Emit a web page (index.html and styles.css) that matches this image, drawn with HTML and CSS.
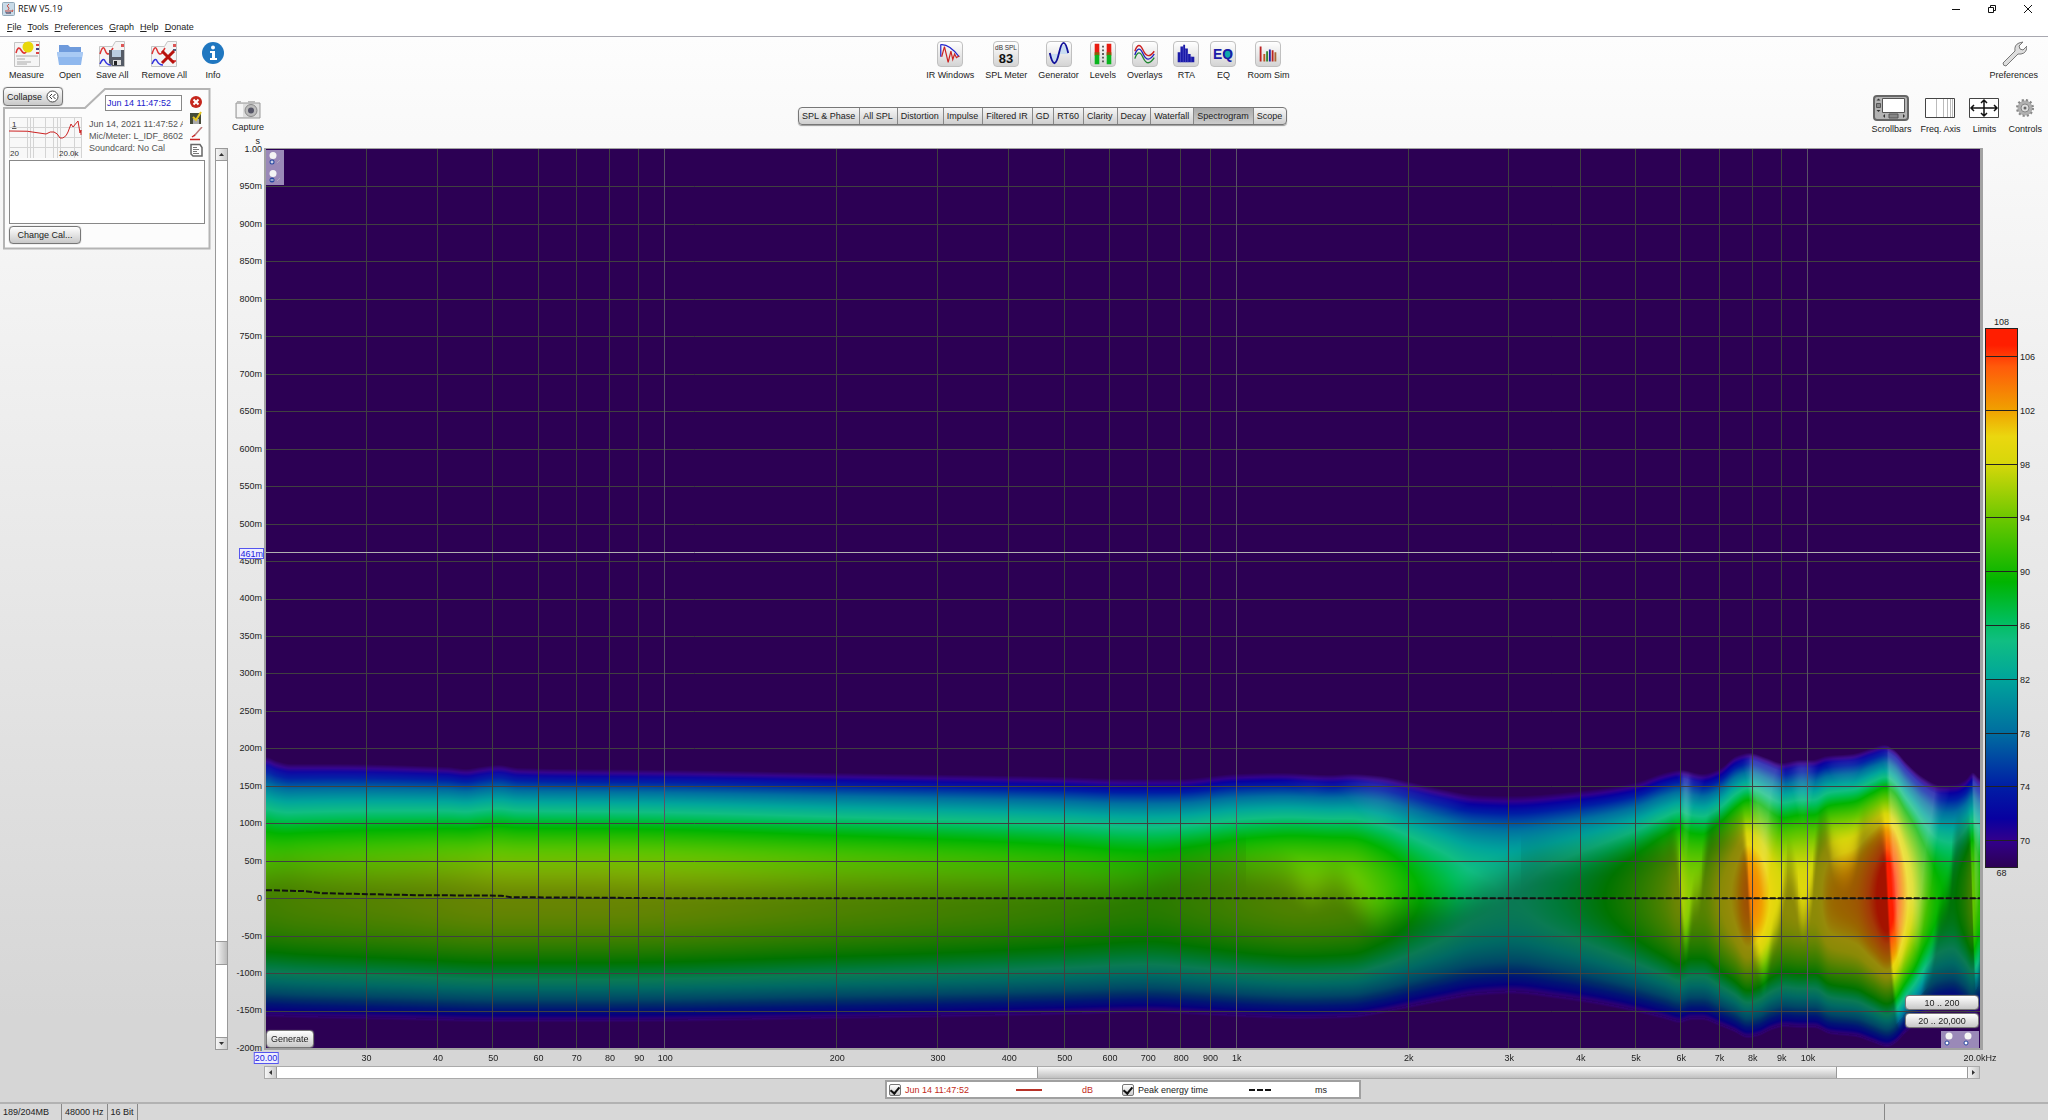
FILE: index.html
```html
<!DOCTYPE html>
<html lang="en">
<head>
<meta charset="utf-8">
<title>REW V5.19</title>
<link rel="stylesheet" href="styles.css">
</head>
<body>
<header class="titlebar">
  <svg class="app-icon" width="13" height="14" viewBox="0 0 13 14"><rect x=".5" y=".5" width="12" height="13" rx="1" fill="#c9dbe8" stroke="#91a8b8"/><path d="M7 2q-3 2-1 3t0 3M3 9h7M4 11h5M10 8q2 0 0 2" fill="none" stroke="#c5483d"/><path d="M3 9.5q3 2 6 0v2H4z" fill="#496f91"/></svg>
  <h1 class="app-title">REW V5.19</h1>
  <div class="window-buttons">
    <button aria-label="Minimize"><svg width="10" height="10"><path d="M1 5.5h8" stroke="#111" fill="none"/></svg></button>
    <button aria-label="Restore"><svg width="10" height="10"><path d="M1.500 3.500h5v5h-5zM3.500 3.500v-2h5v5h-2" stroke="#111" fill="none"/></svg></button>
    <button aria-label="Close"><svg width="10" height="10"><path d="M1 1l8 8M9 1l-8 8" stroke="#111" fill="none"/></svg></button>
  </div>
</header>
<nav class="menubar">
  <a href="#"><u>F</u>ile</a><a href="#"><u>T</u>ools</a><a href="#"><u>P</u>references</a><a href="#"><u>G</u>raph</a><a href="#"><u>H</u>elp</a><a href="#"><u>D</u>onate</a>
</nav>
<div class="workspace">
  <div class="toolbar">
    <div class="tools tools-file">
      <button class="tool"><svg width="26" height="26" viewBox="0 0 26 26"><path d="M.5 1.500h13l3-1h9v25H.5z" fill="#f5f5f5" stroke="#c4c4c4"/><path d="M2 12q2-8 5-3t5 2l4-3" fill="none" stroke="#d33" stroke-width="1.500"/><path d="M2 15h22M3 18h8M3 21h14M3 23h10" stroke="#aaa"/><circle cx="14" cy="6" r="5.500" fill="#e9d80b"/><path d="M22 3h3v2h-3zM22 11h3v2h-3z" fill="#d44"/><path d="M22 7h3v2h-3z" fill="#448"/></svg>Measure</button>
      <button class="tool"><svg width="26" height="26" viewBox="0 0 26 26"><path d="M2 4h9l2 2h11v12H2z" fill="#6f9bdc"/><path d="M0 11h26l-2 13H2z" fill="#8fb8ee"/><path d="M0 11h26l-1 5H1z" fill="#a9caf4"/></svg>Open</button>
      <button class="tool"><svg width="26" height="26" viewBox="0 0 26 26"><path d="M.5 5.500h13l3-5h9v25H.5z" fill="#f5f5f5" stroke="#c4c4c4"/><path d="M1 13q3-10 5-4t5 3l3-5" fill="none" stroke="#d33" stroke-width="1.500"/><path d="M1 23q3-7 5-3t6 4" fill="none" stroke="#33d" stroke-width="1.500"/><path d="M22 3h3v3h-3zM22 13h3v2h-3z" fill="#d55"/><path d="M10 9h15v16H13l-3-3z" fill="#555b66"/><path d="M13 9h9v7h-9z" fill="#b9cde0"/><path d="M14 19h8v5h-8z" fill="#ddd"/><path d="M15 20h3v4h-3z" fill="#222"/></svg>Save All</button>
      <button class="tool"><svg width="26" height="26" viewBox="0 0 26 26"><path d="M.5 5.500h13l3-5h9v25H.5z" fill="#f5f5f5" stroke="#c4c4c4"/><path d="M1 13q3-10 5-4t5 3l3-5" fill="none" stroke="#d33" stroke-width="1.500"/><path d="M1 23q3-7 5-3t6 4" fill="none" stroke="#33d" stroke-width="1.500"/><path d="M22 3h3v3h-3zM22 19h3v2h-3z" fill="#d55"/><path d="M22 8h3v2h-3z" fill="#557"/><path d="M11 10l12 12M23 10l-12 12" stroke="#b8120d" stroke-width="3"/></svg>Remove All</button>
      <button class="tool"><svg width="26" height="26" viewBox="0 0 26 26"><circle cx="13" cy="12" r="11" fill="#2077c0"/><circle cx="13" cy="6.500" r="2" fill="#fff"/><path d="M10 10h5v7h2v2h-7v-2h2v-5h-2z" fill="#fff"/></svg>Info</button>
    </div>
    <div class="tools tools-main">
      <button class="tool"><svg class="tile" width="26" height="26" viewBox="0 0 26 26"><path d="M3 16L3 3q9-1 20 13" fill="none" stroke="#22c" stroke-width="1.300"/><path d="M4 16L7 5l4 17 3-12 2 9 2-6 2 4 3-2" fill="none" stroke="#c22" stroke-width="1.300"/></svg>IR Windows</button>
      <button class="tool"><svg class="tile" width="26" height="26" viewBox="0 0 26 26"><text x="13" y="9" class="spl-unit">dB SPL</text><text x="13" y="23" class="spl-value">83</text></svg>SPL Meter</button>
      <button class="tool"><svg class="tile" width="26" height="26" viewBox="0 0 26 26"><path d="M3 13q5 20 10 0q5-20 10 0z" fill="#c9dcf0"/><path d="M3 12q5 22 10 0q5-22 10 0" fill="none" stroke="#119" stroke-width="2"/></svg>Generator</button>
      <button class="tool"><svg class="tile" width="26" height="26" viewBox="0 0 26 26"><path d="M4 2h5v12H4zM17 2h5v12h-5z" fill="#e81b10"/><path d="M4 11h5v4H4zM17 11h5v4h-5z" fill="#865f08"/><path d="M4 14h5v10H4zM17 14h5v10h-5z" fill="#0ab41e"/><path d="M13 4v18" stroke="#555" stroke-width="2" stroke-dasharray="2 2"/></svg>Levels</button>
      <button class="tool"><svg class="tile" width="26" height="26" viewBox="0 0 26 26"><g fill="none" stroke-width="1.500"><path d="M2 10q4-12 9-1t12 1" stroke="#c22"/><path d="M2 14q4-12 9-1t12 0" stroke="#22b"/><path d="M2 18q4-12 9-1t12 0" stroke="#283"/></g></svg>Overlays</button>
      <button class="tool"><svg class="tile" width="26" height="26" viewBox="0 0 26 26"><path d="M4 22V11h3v11zM7 22V5h3v17zM10 22V3h2v19zM12 22V7h3v15zM15 22v-9h3v9zM18 22v-6h4v6z" fill="#1a1aa8"/><path d="M7 10v12M10 5v17M12.500 8v14M15 12v10M18.500 15v7" stroke="#6a6ad0" stroke-width=".6"/></svg>RTA</button>
      <button class="tool"><svg class="tile" width="26" height="26" viewBox="0 0 26 26"><circle cx="18" cy="13" r="5" fill="#1aa"/><text x="13" y="18" class="eq-mark">EQ</text></svg>EQ</button>
      <button class="tool"><svg class="tile" width="26" height="26" viewBox="0 0 26 26"><g stroke-width="2" fill="none"><path d="M5 21V5M18 21V9" stroke="#b22"/><path d="M9 21v-8" stroke="#b52"/><path d="M12 21V10" stroke="#383"/><path d="M15 21V8" stroke="#22a"/><path d="M21 21V11" stroke="#a63"/></g></svg>Room Sim</button>
    </div>
    <div class="tools tools-prefs">
      <button class="tool"><svg width="26" height="26" viewBox="0 0 26 26"><path d="M2 22L14 10q-1-6 4-8l4-1-4 4 1 3 3 1 4-4q0 7-6 8l-3 0L5 25q-3 0-3-3z" fill="#ddd" stroke="#777"/></svg>Preferences</button>
    </div>
  </div>
  <main class="body">
    <aside class="sidebar">
      <button class="btn collapse">Collapse <svg width="13" height="13"><circle cx="6.500" cy="6.500" r="5.500" fill="#fff" stroke="#444"/><path d="M6 4L3.500 6.500 6 9M9.500 4L7 6.500 9.500 9" fill="none" stroke="#333"/></svg></button>
      <section class="card">
        <svg class="card-outline" width="208" height="162"><path d="M1 20H82L102 1H206.500V160.500H1Z" fill="#fcfcfc" stroke="#b4b4b4" stroke-width="2"/></svg>
        <div class="card-grid">
          <div class="card-left">
            <svg class="thumb" width="73" height="41"><rect width="73" height="41" fill="#f8f8f8"/><path d="M0 .5h73M0 10.500h73M0 20.500h73M0 30.500h73M.5 0v41M18.500 0v41M21.500 0v41M24.500 0v41M36.500 0v41M44.500 0v41M48.500 0v41M51.500 0v41M65.500 0v41M72.500 0v41" stroke="#d4d4d4"/><path d="M0 14q18-1 37 3q9-6 14 4q5 1 8-6l3-8 2 3 5-6 2 12 1-3v5" fill="none" stroke="#c22"/><text x="3" y="10" class="thumb-text underline">1</text><text x="1" y="39" class="thumb-text">20</text><text x="50" y="39" class="thumb-text">20.0k</text></svg>
          </div>
          <div class="card-info">
            <input class="name-input" aria-label="Measurement name" value="Jun 14 11:47:52">
            <p>Jun 14, 2021 11:47:52 AM</p><p>Mic/Meter: L_IDF_8602065</p><p>Soundcard: No Cal</p>
          </div>
          <div class="card-icons">
            <button aria-label="Remove"><svg width="14" height="14"><circle cx="7" cy="7" r="6" fill="#c5261c"/><path d="M4.500 4.500l5 5M9.500 4.500l-5 5" stroke="#fff" stroke-width="2"/></svg></button>
            <button aria-label="Save"><svg width="14" height="14"><path d="M1 2h11v11H1z" fill="#454b38"/><path d="M4 8h6v5H4z" fill="#aaa"/><path d="M4 6l3 3 5-8" fill="none" stroke="#e6c620" stroke-width="2"/></svg></button>
            <button aria-label="Trace colour"><svg width="14" height="14"><path d="M13 0L5 9" stroke="#b77" stroke-width="1.500"/><path d="M6 8l-3 2M1 12.500h10" stroke="#c22" stroke-width="1.500"/></svg></button>
            <button aria-label="Notes"><svg width="14" height="14"><path d="M2 1.500h9l2 3V13H4l-2-2z" fill="#fff" stroke="#666" stroke-width="1.500"/><path d="M4 4.500h4M4 6.500h6M4 8.500h4M4 10.500h6" stroke="#777"/></svg></button>
          </div>
        </div>
        <textarea class="notes" aria-label="Notes"></textarea>
        <button class="btn change-cal">Change Cal...</button>
      </section>
    </aside>
    <section class="graph-area">
      <div class="graph-head">
        <div class="head-left"><button class="tool"><svg width="26" height="22" viewBox="0 0 26 22"><path d="M1 5h24v15H1z" fill="#ddd" stroke="#999"/><path d="M2 3h4v2H2zM13 3h7v2h-7z" fill="#bbb"/><path d="M2 6h6v13H2z" fill="#f5f5f5"/><circle cx="16" cy="12.500" r="6" fill="#bbb" stroke="#888"/><circle cx="16" cy="12.500" r="3" fill="#556"/></svg>Capture</button></div>
        <nav class="tabs">
          <button>SPL &amp; Phase</button><button>All SPL</button><button>Distortion</button><button>Impulse</button><button>Filtered IR</button><button>GD</button><button>RT60</button><button>Clarity</button><button>Decay</button><button>Waterfall</button><button class="active">Spectrogram</button><button>Scope</button>
        </nav>
        <div class="head-right">
          <button class="tool"><svg width="36" height="26"><rect x="1" y="1" width="34" height="24" rx="3" fill="#b4b4b4" stroke="#666" stroke-width="2"/><path d="M9.500 3.500h22v14h-22z" fill="#fff" stroke="#555"/><path d="M3.500 5.500l2-2 2 2zM3.500 15l2 2 2-2zM12 19l-2 2 2 2zM30 19l2 2-2 2z" fill="#333"/><path d="M3.500 8.500h4v4h-4zM16 19h9v4h-9z" fill="#888" stroke="#555"/></svg>Scrollbars</button>
          <button class="tool"><svg width="30" height="26"><path d="M.5 3.500h29v19H.5z" fill="#fff" stroke="#444"/><path d="M11.500 4v18M18.500 4v18M22.500 4v18M25.500 4v18M27.500 4v18" stroke="#bbb"/></svg>Freq. Axis</button>
          <button class="tool"><svg width="30" height="26"><path d="M.5 3.500h29v19H.5z" fill="#fff" stroke="#444"/><path d="M2 13h26M15 5v16M12 8l3-3 3 3M12 18l3 3 3-3M5 10l-3 3 3 3M25 10l3 3-3 3" stroke="#111" stroke-width="1.500" fill="none"/></svg>Limits</button>
          <button class="tool"><svg width="26" height="26"><circle cx="13" cy="13" r="7.500" fill="#aaa" stroke="#888" stroke-width="3" stroke-dasharray="2 2"/><circle cx="13" cy="13" r="7" fill="#b0b0b0"/><circle cx="13" cy="13" r="4" fill="#ddd" stroke="#888"/><circle cx="13" cy="13" r="1.500" fill="#666"/></svg>Controls</button>
        </div>
      </div>
      <div class="plot-grid">
        <div class="vscroll"><button aria-label="Scroll up"><svg width="7" height="5"><path d="M1 4l2.500-3L6 4z" fill="#333"/></svg></button><span class="vtrack"></span><span class="vthumb"></span><span class="vtrack-end"></span><button aria-label="Scroll down"><svg width="7" height="5"><path d="M1 1l2.500 3L6 1z" fill="#333"/></svg></button></div>
        <div class="yaxis"><span class="unit">s</span><div class="ylabels" id="ylabels"></div><span class="cursor-y">461m</span></div>
        <div class="plot">
          <canvas id="spectrogram" class="spectrogram" width="1714" height="899"></canvas>
          <div class="zoom-y"><svg width="18" height="35"><g><circle cx="7" cy="5.500" r="3.500" fill="#f4f4f4"/><circle cx="6" cy="12" r="2.500" fill="#2848a0"/><path d="M4.500 12h3M6 10.500v3" stroke="#fff"/><path d="M11 13l3-3" stroke="#b0a8c0"/></g><g><circle cx="7" cy="23.500" r="3.500" fill="#f4f4f4"/><circle cx="6" cy="30" r="2.500" fill="#2848a0"/><path d="M4.500 30h3" stroke="#fff"/><path d="M11 31l3-3" stroke="#b0a8c0"/></g></svg></div>
          <button class="btn generate">Generate</button>
          <div class="ranges"><button class="btn">10 .. 200</button><button class="btn">20 .. 20,000</button>
            <svg width="38" height="17"><rect width="38" height="17" fill="#9a89b8"/><circle cx="8" cy="5" r="3.500" fill="#f4f4f4"/><circle cx="6" cy="12" r="2" fill="#fff" stroke="#2848a0"/><circle cx="27" cy="5" r="3.500" fill="#f4f4f4"/><circle cx="25" cy="12" r="2" fill="#fff" stroke="#2848a0"/></svg></div>
        </div>
        <div class="legend-scale"><span class="scale-end">108</span><div class="scale-bar" id="scale"></div><span class="scale-end">68</span></div>
        <div class="xaxis" id="xaxis"><span class="cursor-x">20.00</span></div>
        <div class="hscroll"><button aria-label="Scroll left"><svg width="5" height="7"><path d="M4 1L1 3.500 4 6z" fill="#333"/></svg></button><span class="htrack"></span><span class="hthumb"></span><span class="htrack-end"></span><button aria-label="Scroll right"><svg width="5" height="7"><path d="M1 1l3 2.500L1 6z" fill="#333"/></svg></button></div>
      </div>
    </section>
  </main>
  <div class="legend">
    <label class="trace-red"><input type="checkbox" checked>Jun 14 11:47:52</label>
    <svg width="26" height="6"><path d="M0 3h26" stroke="#b83228" stroke-width="2"/></svg><span class="trace-red">dB</span>
    <label><input type="checkbox" checked>Peak energy time</label>
    <svg width="24" height="6"><path d="M0 3h24" stroke="#111" stroke-width="2" stroke-dasharray="6 2"/></svg><span>ms</span>
  </div>
</div>
<footer class="statusbar"><span class="cell-mem">189/204MB</span><span>48000 Hz</span><span>16 Bit</span><span class="cell-end"></span></footer>
<script src="plot.js"></script>
</body>
</html>
```
FILE: styles.css
```css
* { box-sizing: border-box; }
body { margin: 0; min-height: 100vh; display: flex; flex-direction: column; font: 9px/12px "Liberation Sans", Arial, sans-serif; color: #222; background: #fff; }
button, input, textarea { font: inherit; color: inherit; margin: 0; }
button { background: none; border: 0; padding: 0; }
a { color: inherit; text-decoration: none; }
p { margin: 0; }
svg { display: block; flex: none; }

.titlebar { display: flex; align-items: center; height: 18px; padding: 0 15px 0 2px; }
.app-title { margin: 0 0 0 3px; font: 9px/16px "Open Sans", "Noto Sans", sans-serif; color: #111; }
.window-buttons { margin-left: auto; display: flex; gap: 26px; }
.menubar { display: flex; gap: 6px; height: 19px; padding: 3px 7px; border-bottom: 1px solid #a8a8b0; }

.workspace { flex: 1; display: flex; flex-direction: column; background: linear-gradient(#fdfdfd, #d6d6d6 92%); border-bottom: 2px solid #b2b2b2; }
.toolbar { display: flex; justify-content: space-between; height: 50px; padding: 4px 10px 0 9px; }
.tools { display: flex; }
.tools-file { gap: 13px; }
.tools-main { gap: 11px; }
.tool { display: flex; flex-direction: column; align-items: center; gap: 1px; white-space: nowrap; }
.tool svg { margin-bottom: 1px; }
.tile { border: 1px solid #c0c0c0; border-radius: 4px; background: linear-gradient(#fff, #d4d4d4); }
.spl-unit { font-size: 7px; text-anchor: middle; fill: #333; }
.spl-value { font-size: 14px; font-weight: bold; text-anchor: middle; fill: #111; }
.eq-mark { font-size: 15px; font-weight: bold; text-anchor: middle; fill: #1c1ca8; }

.body { flex: 1; display: flex; }
.btn { border: 1px solid #777; border-radius: 4px; background: linear-gradient(#fff, #c8c8c8); box-shadow: 0 0 1px #888; height: 18px; }

.sidebar { width: 215px; padding-left: 3px; position: relative; }
.collapse { position: absolute; left: 3px; top: 0; z-index: 1; display: flex; align-items: center; gap: 4px; height: 19px; padding: 0 3px; }
.card { position: relative; width: 208px; margin-top: 1px; padding: 7px 6px 4px 6px; }
.card-outline { position: absolute; left: 0; top: 0; }
.card > :not(.card-outline) { position: relative; }
.card-grid { display: grid; grid-template-columns: 73px 95px 14px; column-gap: 6px; }
.card-left { padding-top: 22px; }
.card-info { white-space: nowrap; color: #555; }
.card-info p { padding-left: 1px; overflow: hidden; }
.name-input { display: block; width: 77px; height: 16px; margin: 0 0 7px 17px; border: 1px solid #888; padding: 0 0 0 1px; color: #22c; background: #fff; }
.card-icons { display: flex; flex-direction: column; gap: 2px; }
.thumb-text { font-size: 8px; fill: #333; }
.underline { text-decoration: underline; }
.notes { display: block; width: 196px; height: 64px; margin: 2px 0; border: 1px solid #888; resize: none; background: #fff; }
.change-cal { width: 72px; }

.graph-area { flex: 1; display: flex; flex-direction: column; min-width: 0; }
.graph-head { display: grid; grid-template-columns: 3fr auto 4fr; height: 57px; padding: 7px 6px 0 17px; }
.head-left { display: flex; padding-top: 4px; align-items: flex-start; }
.head-left .tool { gap: 0; }
.head-right { display: flex; justify-content: flex-end; align-items: flex-start; gap: 9px; padding-top: 1px; }
.head-right .tool { gap: 1px; }
.tabs { display: flex; align-self: start; height: 18px; margin-top: 13px; border: 1px solid #777; border-radius: 4px; overflow: hidden; background: linear-gradient(#f6f6f6, #cfcfcf); box-shadow: 0 1px 1px #999; }
.tabs button { padding: 0 4px 0 3px; border-right: 1px solid #888; }
.tabs button:last-child { border-right: 0; }
.tabs .active { background: linear-gradient(#aaa, #ccc); }

.plot-grid { flex: 1; display: grid; grid-template-columns: 14px 35px 1fr 65px; grid-template-rows: 1fr 16px 13px; padding-top: 4px; }
.vscroll { display: flex; flex-direction: column; border: 1px solid #999; background: #fff; margin: 0 1px 0 0; }
.vscroll button, .hscroll button { display: grid; place-items: center; background: linear-gradient(90deg, #f6f6f6, #ccc); }
.vscroll button { height: 12px; border-bottom: 1px solid #999; }
.vscroll button:last-child { border-bottom: 0; border-top: 1px solid #999; }
.vtrack { flex: 780; }
.vthumb { flex: 22; background: linear-gradient(90deg, #f6f6f6, #bbb); border: solid #999; border-width: 1px 0; }
.vtrack-end { flex: 72; }
.yaxis { position: relative; padding-right: 2px; text-align: right; }
.unit { position: absolute; right: 4px; top: -13px; }
.ylabels { display: flex; flex-direction: column; justify-content: space-between; height: calc(100% + 9px); margin-top: -5px; }
.cursor-y { position: absolute; right: 0; top: calc(45% - 6px); height: 11px; line-height: 10px; border: 1px solid #55e; color: #22d; background: #eef; }
.plot { position: relative; border: solid #a2a2a2; border-width: 1px 3px 2px 2px; min-height: 0; }
.spectrogram { position: absolute; left: 0; top: 0; width: 100%; height: 100%; display: block; background: #2c0054; }
.zoom-y { position: absolute; left: 0; top: 1px; background: #9a89b8; }
.generate { position: absolute; left: 0; bottom: 0; padding: 0 4px; }
.ranges { position: absolute; right: 1px; bottom: 0; width: 74px; display: flex; flex-direction: column; align-items: stretch; gap: 3px; }
.ranges .btn { height: 15px; line-height: 12px; }
.ranges svg { align-self: flex-end; }

.legend-scale { display: flex; flex-direction: column; justify-content: center; padding: 0 0 2px 2px; }
.scale-end { width: 33px; text-align: center; line-height: 11px; }
.scale-bar { position: relative; width: 33px; height: 60%; border: 1px solid #222; background: linear-gradient(to top, #2c0054, #32008c 5%, #0800a0 9%, #001ea5 15%, #006ea0 25%, #00a59b 35%, #10be82 42%, #00be5a 46%, #00b400 53%, #6ec800 65%, #d7d70a 75%, #ebd70f 80%, #f0a000 85%, #ff5a0a 93%, #ff1e00 97%, #ff1e00); }
.scale-bar span { position: absolute; left: 0; width: 100%; border-top: 1px solid #222; }
.scale-bar b { position: absolute; left: 34px; top: -6px; font-weight: normal; line-height: 12px; }

.xaxis { grid-column: 3; position: relative; margin: 0 3px 0 2px; }
.xaxis span { position: absolute; top: 2px; transform: translateX(-50%); }
.xaxis .cursor-x { left: 0; top: 2px; height: 12px; line-height: 10px; border: 1px solid #55e; color: #22d; background: #eef; }
.hscroll { grid-column: 3; display: flex; border: 1px solid #aaa; background: #fff; margin-right: 3px; }
.hscroll button { width: 12px; border-right: 1px solid #999; }
.hscroll button:last-child { border: 0; border-left: 1px solid #999; }
.htrack { flex: 760; }
.hthumb { flex: 799; border: solid #999; border-width: 0 1px; background: linear-gradient(#f8f8f8, #c0c0c0); }
.htrack-end { flex: 130; }

.legend { align-self: center; width: 476px; height: 19px; margin: 1px 0 3px 198px; padding: 0 34px 0 2px; display: grid; grid-template-columns: 127px 66px 40px 127px 66px 1fr; align-items: center; border: 2px solid #a0a0a0; background: #fff; }
.legend label { display: flex; align-items: center; gap: 4px; }
.legend input { appearance: none; width: 12px; height: 12px; border: 1px solid #777; border-radius: 2px; background: linear-gradient(#fff, #ccc); display: grid; place-items: center; }
.legend input:checked::before { content: ""; width: 4px; height: 7px; margin-bottom: 2px; border: solid #111; border-width: 0 2px 2px 0; transform: rotate(40deg); }
.trace-red { color: #c22a20; }

.statusbar { display: flex; height: 16px; background: #d8d8d8; line-height: 16px; }
.statusbar span { padding: 0 3px; border-right: 1px solid #888; }
.statusbar .cell-mem { width: 62px; }
.statusbar .cell-end { margin-left: auto; padding: 0; width: 164px; border-right: 0; border-left: 1px solid #888; }
```
FILE: plot.js
```js
// Colour scale: level in dB -> rgb
const SCALE = [[68,44,0,84],[70,50,0,140],[71.6,8,0,160],[74,0,30,165],[78,0,110,160],[82,0,165,155],[84.8,16,190,130],[86.4,0,190,90],[89.2,0,180,0],[94,110,200,0],[98,215,215,10],[100,235,215,15],[102,240,160,0],[105.2,255,90,10],[106.8,255,30,0],[110,255,30,0]];
// Edge of the 68 dB contour after and before the peak: [position across the plot, distance from 0 ms]
const AFTER = [[0,142],[10,138],[24,135],[60,135],[180,132],[200,130],[214,132],[232,134],[252,131],[300,130],[400,129],[571,126],[796,122],[860,120],[913,120],[970,125],[1013,126],[1064,124],[1084,125],[1113,123],[1143,117],[1174,110],[1209,104],[1245,103],[1314,108],[1368,116],[1398,126],[1414,129],[1436,125],[1453,130],[1470,143],[1483,146],[1500,141],[1515,136],[1533,139],[1546,139],[1560,143],[1586,145],[1606,151],[1618,154],[1628,149],[1640,136],[1656,122],[1673,114],[1690,115],[1700,120],[1706,127],[1714,120]];
const BEFORE = [[0,119],[33,120],[133,122],[233,124],[333,124],[571,121],[700,119],[796,117],[883,115],[933,117],[993,120],[1033,121],[1084,120],[1113,116],[1143,110],[1174,104],[1209,98],[1245,96],[1293,101],[1333,107],[1373,115],[1398,121],[1414,125],[1424,122],[1436,122],[1453,128],[1468,134],[1481,140],[1492,138],[1505,132],[1518,129],[1534,130],[1548,130],[1563,136],[1590,139],[1605,144],[1621,149],[1628,146],[1638,136],[1648,127],[1658,117],[1672,109],[1686,107],[1698,113],[1706,119],[1714,112]];
const canvas = document.getElementById('spectrogram');
const ctx = canvas.getContext('2d');
const W = canvas.width, H = canvas.height, ZERO = H * 20 / 24;

// Monotone cubic through the contour points, lightly smoothed
function profile(points) {
  const n = points.length, d = [], m = [];
  for (let i = 0; i < n - 1; i++) d[i] = (points[i+1][1] - points[i][1]) / (points[i+1][0] - points[i][0]);
  for (let i = 0; i < n; i++) m[i] = i === 0 || i === n - 1 || d[i-1] * d[i] <= 0 ? 0 : 2 * d[i-1] * d[i] / (d[i-1] + d[i]);
  const raw = [];
  for (let x = 0, i = 0; x < W; x++) {
    while (i < n - 2 && x > points[i+1][0]) i++;
    const h = points[i+1][0] - points[i][0], u = (x - points[i][0]) / h;
    raw[x] = (2*u*u*u - 3*u*u + 1) * points[i][1] + (u*u*u - 2*u*u + u) * h * m[i] + (3*u*u - 2*u*u*u) * points[i+1][1] + (u*u*u - u*u) * h * m[i+1];
  }
  return average(raw, 2);
}
function average(values, r) {
  return values.map((_, x) => {
    let s = 0;
    for (let k = -r; k <= r; k++) s += values[Math.max(0, Math.min(W - 1, x + k))];
    return s / (2 * r + 1);
  });
}
function colour(level) {
  let i = 0;
  while (i < SCALE.length - 2 && level > SCALE[i+1][0]) i++;
  const a = SCALE[i], b = SCALE[i+1], u = Math.max(0, Math.min(1, (level - a[0]) / (b[0] - a[0])));
  return [1, 2, 3].map(k => a[k] + (b[k] - a[k]) * u);
}
const after = profile(AFTER), before = profile(BEFORE);
const peak = before.map(v => 68 + 0.00182 * v * v);
const steep = peak.map((_, x) => Math.min(0.18, (peak[Math.min(W - 1, x + 1)] - peak[Math.max(0, x - 1)]) / 2));
// Low frequencies vary slowly and take a wider average than the sharp resonances
const wide = average(steep, 18), narrow = average(steep, 3);
const slopes = steep.map((_, x) => {
  const u = Math.max(0, Math.min(1, (x - 1370) / 40));
  return wide[x] * (1 - u) + narrow[x] * u;
});
const LUT = Array.from({ length: 4300 }, (_, i) => colour(68 + i / 100));
// Narrow decaying ridges that catch more light: [centre, half width, strength]
const RIDGES = [[1427,10,22],[1536,10,45],[1043,18,12],[1105,22,12],[1490,10,30],[1580,16,12]];
const image = ctx.createImageData(W, H);
for (let x = 0; x < W; x++) {
  const slope = slopes[x];
  let extra = 0;
  for (const [c, w, s] of RIDGES) extra += s * Math.exp(-(((x - c) / w) ** 2));
  for (let y = 0; y < H; y++) {
    const d = ZERO - y, edge = d > 0 ? after[x] : before[x];
    const level = peak[x] - (peak[x] - 68) * Math.abs(d / edge) ** (d > 0 ? 2.3 : 2.15);
    const o = (y * W + x) * 4;
    let c = LUT[0], light = 1, glow = 0;
    if (level > 68) {
      c = LUT[Math.min(4299, Math.floor((level - 68) * 100))];
      let damp = 1;
      if (slope > 0 && d > 0) damp = 1 - 0.8 * d / edge;
      if (slope < 0 && d < 0) damp = 1 + 0.35 * d / edge;
      const s = d - 430 * slope * damp + extra;
      const u = Math.max(0, Math.min(1, (s + 6) / (slope > 0.02 ? 72 : 60)));
      light = 0.64 + 0.36 * u * u * (3 - 2 * u);
      glow = Math.max(0, Math.min(0.22, (s - 115) / 340));
      if (level < 72) glow *= (level - 68) / 4;
      if (level < 78) light = Math.max(light, 1 - 0.036 * (level - 68));
      if (d < 0 && level < 78) light = Math.max(0.64, light * 0.9);
      if (level < 69.2) light = 1;
    }
    for (let k = 0; k < 3; k++) image.data[o + k] = c[k] * light + (255 - c[k] * light) * glow;
    image.data[o + 3] = 255;
  }
}
ctx.putImageData(image, 0, 0);

// Grid
ctx.lineWidth = 1;
function line(x1, y1, x2, y2, style) { ctx.strokeStyle = style; ctx.beginPath(); ctx.moveTo(x1, y1); ctx.lineTo(x2, y2); ctx.stroke(); }
for (let i = 1; i < 24; i++) { const y = Math.round(H * i / 24) + 0.5; line(0, y, W, y, '#404040'); }
const fx = f => Math.log10(f / 20) / 3;
for (let dec = 10; dec <= 10000; dec *= 10) for (let k = 1; k < 10; k++) {
  const f = dec * k;
  if (f > 20 && f < 20000) { const x = Math.round(fx(f) * W) - 0.5; line(x, 0, x, H, k === 1 ? '#5a5366' : '#404040'); }
}
const cursor = Math.floor(H * 0.449) + 0.5;
line(0, cursor, W, cursor, '#b0b0b0');

// Peak energy time
ctx.strokeStyle = '#111';
ctx.lineWidth = 2;
ctx.setLineDash([6, 2]);
ctx.beginPath();
[[0,-8],[40,-7],[56,-5],[150,-3],[235,-2.500],[245,-1],[400,0],[W,0]].forEach(([x, y], i) => i ? ctx.lineTo(x, ZERO + y) : ctx.moveTo(x, ZERO + y));
ctx.stroke();

// Axis labels
const ylabels = document.getElementById('ylabels');
for (let v = 1000; v >= -200; v -= 50) {
  const el = document.createElement('span');
  el.textContent = v === 1000 ? '1.00' : v === 0 ? '0' : v + 'm';
  ylabels.append(el);
}
const xaxis = document.getElementById('xaxis');
[30,40,50,60,70,80,90,100,200,300,400,500,600,700,800,900,1000,2000,3000,4000,5000,6000,7000,8000,9000,10000,20000].forEach(f => {
  const el = document.createElement('span');
  el.textContent = f === 20000 ? '20.0kHz' : f >= 1000 ? f / 1000 + 'k' : f;
  el.style.left = fx(f) * 100 + '%';
  xaxis.append(el);
});
const scale = document.getElementById('scale');
for (let v = 106; v >= 70; v -= 4) {
  const el = document.createElement('span'), b = document.createElement('b');
  el.style.top = (108 - v) / 40 * 100 + '%';
  b.textContent = v;
  el.append(b);
  scale.append(el);
}
```
